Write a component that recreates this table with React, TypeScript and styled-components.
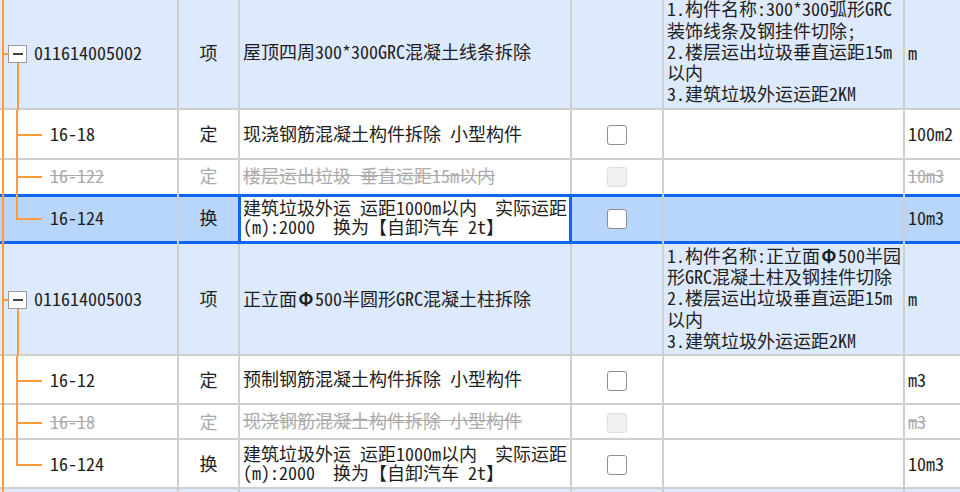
import React, { useLayoutEffect, useRef } from 'react';
import styled, { createGlobalStyle, css } from 'styled-components';

const C = {
  grid: '#cfcfcf',
  orange: '#ff9a3d',
  itemBg: '#dde9fc',
  selBg: '#b8d6fc',
  selLine: '#0d66f2',
  text: '#1e1e1e',
  muted: '#ababab',
};

const GlobalStyle = createGlobalStyle`
  html, body { margin: 0; padding: 0; width: 960px; height: 492px; overflow: hidden; background: #fff; }
  body {
    font-family: "Noto Sans Mono CJK SC", "Noto Sans CJK SC", monospace;
    font-size: 18px;
    color: ${C.text};
  }
`;

const Viewport = styled.div`
  width: 960px;
  height: 492px;
  overflow: hidden;
  background: #fff;
`;

const Table = styled.div`
  display: flex;
  flex-direction: column;
  width: 960px;
`;

type Kind = 'item' | 'child';

const Row = styled.div<{ $h: number; $kind: Kind; $selected?: boolean; $noLine?: boolean }>`
  display: grid;
  grid-template-columns: 179px 61px 332px 92px 241px 1fr;
  height: ${(p) => p.$h}px;
  flex: none;
  background: ${(p) => (p.$selected ? C.selBg : p.$kind === 'item' ? C.itemBg : '#fff')};
  box-shadow: ${(p) =>
    p.$selected
      ? `inset 0 3px 0 ${C.selLine}, inset 0 -3px 0 ${C.selLine}`
      : p.$noLine
      ? 'none'
      : `inset 0 -2px 0 ${C.grid}`};
`;

const CellBase = styled.div`
  box-sizing: border-box;
  border-right: 2px solid ${C.grid};
  min-width: 0;
  display: flex;
  align-items: center;
`;

const TextCell = styled(CellBase)`
  padding-bottom: 4px;
`;

const TreeCell = styled(CellBase)`
  align-items: stretch;
`;

const Rail = styled.div`
  flex: none;
  width: 2px;
  margin-left: 2px;
  background: ${C.orange};
`;

const Stub = styled.div`
  flex: none;
  align-self: center;
  width: 4px;
  height: 2px;
  background: ${C.orange};
`;

const ToggleColumn = styled.div`
  flex: none;
  width: 19px;
  display: flex;
  flex-direction: column;
  align-items: center;
`;

const Spacer = styled.div`
  flex: 1;
`;

const Drop = styled.div`
  flex: 1;
  width: 2px;
  background: ${C.orange};
`;

const ToggleBox = styled.div`
  flex: none;
  box-sizing: border-box;
  width: 19px;
  height: 18px;
  border: 1px solid #9b9b9b;
  background: #fff;
  display: flex;
  align-items: center;
  justify-content: center;
`;

const Minus = styled.span`
  display: block;
  width: 10px;
  height: 2px;
  background: #444;
`;

const Branch = styled.div`
  flex: none;
  width: 26px;
  margin-left: 12px;
  display: flex;
  flex-direction: column;
`;

const BranchTop = styled.div`
  flex: 1;
  border-left: 2px solid ${C.orange};
  border-bottom: 2px solid ${C.orange};
`;

const BranchBottom = styled.div<{ $last?: boolean }>`
  flex: 1;
  border-left: 2px solid ${(p) => (p.$last ? 'transparent' : C.orange)};
`;

const mutedText = css`
  color: ${C.muted};
  text-decoration: line-through;
`;

const Code = styled.span<{ $muted?: boolean; $indent: number }>`
  align-self: center;
  margin-left: ${(p) => p.$indent}px;
  padding-bottom: 4px;
  white-space: pre;
  line-height: 20px;
  ${(p) => p.$muted && mutedText}
`;

const TypeCell = styled(TextCell)<{ $muted?: boolean }>`
  justify-content: center;
  ${(p) => p.$muted && `color: ${C.muted};`}
`;

const NameCell = styled(TextCell)<{ $active?: boolean; $muted?: boolean }>`
  padding-left: 3px;
  line-height: 19px;
  ${(p) => p.$muted && mutedText}
  ${(p) =>
    p.$active &&
    css`
      background: #fff;
      border-right: 3px solid ${C.selLine};
      box-shadow: -2px 0 0 ${C.selLine}, inset 1px 0 0 ${C.selLine}, inset 0 3px 0 ${C.selLine},
        inset 0 -3px 0 ${C.selLine};
    `}
`;

const Lines = styled.div`
  white-space: pre;
`;

const CheckCell = styled(CellBase)`
  justify-content: center;
`;

const Checkbox = styled.span<{ $disabled?: boolean }>`
  box-sizing: border-box;
  display: block;
  width: 20px;
  height: 20px;
  border-radius: 3px;
  border: 1.5px solid ${(p) => (p.$disabled ? '#dedede' : '#8f8f8f')};
  background: ${(p) => (p.$disabled ? '#f0f0f0' : '#fff')};
`;

const DescCell = styled(TextCell)`
  padding-left: 3px;
  line-height: 21.3px;
`;

const UnitCell = styled(TextCell)<{ $muted?: boolean }>`
  padding-left: 3px;
  border-right: none;
  ${(p) => p.$muted && mutedText}
`;

const Phi = styled.span`
  display: inline-block;
  width: 1em;
  text-align: center;
  font-weight: bold;
`;

const renderText = (s: string) => {
  const parts = s.split('Φ');
  return parts.map((part, i) => (
    <React.Fragment key={i}>
      {i > 0 && <Phi>Φ</Phi>}
      {part}
    </React.Fragment>
  ));
};

type RowData = {
  kind: Kind;
  h: number;
  code: string;
  type: string;
  name: string[];
  desc?: string[];
  unit: string;
  check?: 'on' | 'disabled';
  muted?: boolean;
  selected?: boolean;
  noLine?: boolean;
  last?: boolean;
};

const DESC_1 = [
  '1.构件名称:300*300弧形GRC',
  '装饰线条及钢挂件切除;',
  '2.楼层运出垃圾垂直运距15m',
  '以内',
  '3.建筑垃圾外运运距2KM',
];

const DESC_2 = [
  '1.构件名称:正立面Φ500半园',
  '形GRC混凝土柱及钢挂件切除',
  '2.楼层运出垃圾垂直运距15m',
  '以内',
  '3.建筑垃圾外运运距2KM',
];

const TRANSPORT = ['建筑垃圾外运 运距1000m以内  实际运距', '(m):2000  换为【自卸汽车 2t】'];

const rows: RowData[] = [
  { kind: 'item', h: 113, code: '011614005002', type: '项', name: ['屋顶四周300*300GRC混凝土线条拆除'], desc: DESC_1, unit: 'm' },
  { kind: 'child', h: 50, code: '16-18', type: '定', name: ['现浇钢筋混凝土构件拆除 小型构件'], unit: '100m2', check: 'on' },
  { kind: 'child', h: 34, code: '16-122', type: '定', name: ['楼层运出垃圾 垂直运距15m以内'], unit: '10m3', check: 'disabled', muted: true, noLine: true },
  { kind: 'child', h: 50, code: '16-124', type: '换', name: TRANSPORT, unit: '10m3', check: 'on', selected: true, last: true },
  { kind: 'item', h: 112, code: '011614005003', type: '项', name: ['正立面Φ500半圆形GRC混凝土柱拆除'], desc: DESC_2, unit: 'm' },
  { kind: 'child', h: 49, code: '16-12', type: '定', name: ['预制钢筋混凝土构件拆除 小型构件'], unit: 'm3', check: 'on' },
  { kind: 'child', h: 35, code: '16-18', type: '定', name: ['现浇钢筋混凝土构件拆除 小型构件'], unit: 'm3', check: 'disabled', muted: true },
  { kind: 'child', h: 49, code: '16-124', type: '换', name: TRANSPORT, unit: '10m3', check: 'on', last: true },
  { kind: 'item', h: 113, code: '', type: '', name: [''], unit: '' },
];

const TreeBranch: React.FC<{ row: RowData }> = ({ row }) =>
  row.kind === 'item' ? (
    <TreeCell>
      <Rail />
      <Stub />
      <ToggleColumn>
        <Spacer />
        <ToggleBox>
          <Minus />
        </ToggleBox>
        <Drop />
      </ToggleColumn>
      <Code $indent={7}>{row.code}</Code>
    </TreeCell>
  ) : (
    <TreeCell>
      <Rail />
      <Branch>
        <BranchTop />
        <BranchBottom $last={row.last} />
      </Branch>
      <Code $indent={8} $muted={row.muted}>
        {row.code}
      </Code>
    </TreeCell>
  );

export default function App() {
  const ref = useRef<HTMLDivElement>(null);
  useLayoutEffect(() => {
    if (ref.current) ref.current.scrollTop = 3;
  }, []);

  return (
    <>
      <GlobalStyle />
      <Viewport ref={ref}>
        <Table>
          {rows.map((row, i) => (
            <Row key={i} $h={row.h} $kind={row.kind} $selected={row.selected} $noLine={row.noLine}>
              <TreeBranch row={row} />
              <TypeCell $muted={row.muted}>{row.type}</TypeCell>
              <NameCell $active={row.selected} $muted={row.muted}>
                <Lines>
                  {row.name.map((l, j) => (
                    <div key={j}>{renderText(l)}</div>
                  ))}
                </Lines>
              </NameCell>
              <CheckCell>{row.check && <Checkbox $disabled={row.check === 'disabled'} />}</CheckCell>
              <DescCell>
                {row.desc && (
                  <Lines>
                    {row.desc.map((l, j) => (
                      <div key={j}>{renderText(l)}</div>
                    ))}
                  </Lines>
                )}
              </DescCell>
              <UnitCell $muted={row.muted}>{row.unit}</UnitCell>
            </Row>
          ))}
        </Table>
      </Viewport>
    </>
  );
}
